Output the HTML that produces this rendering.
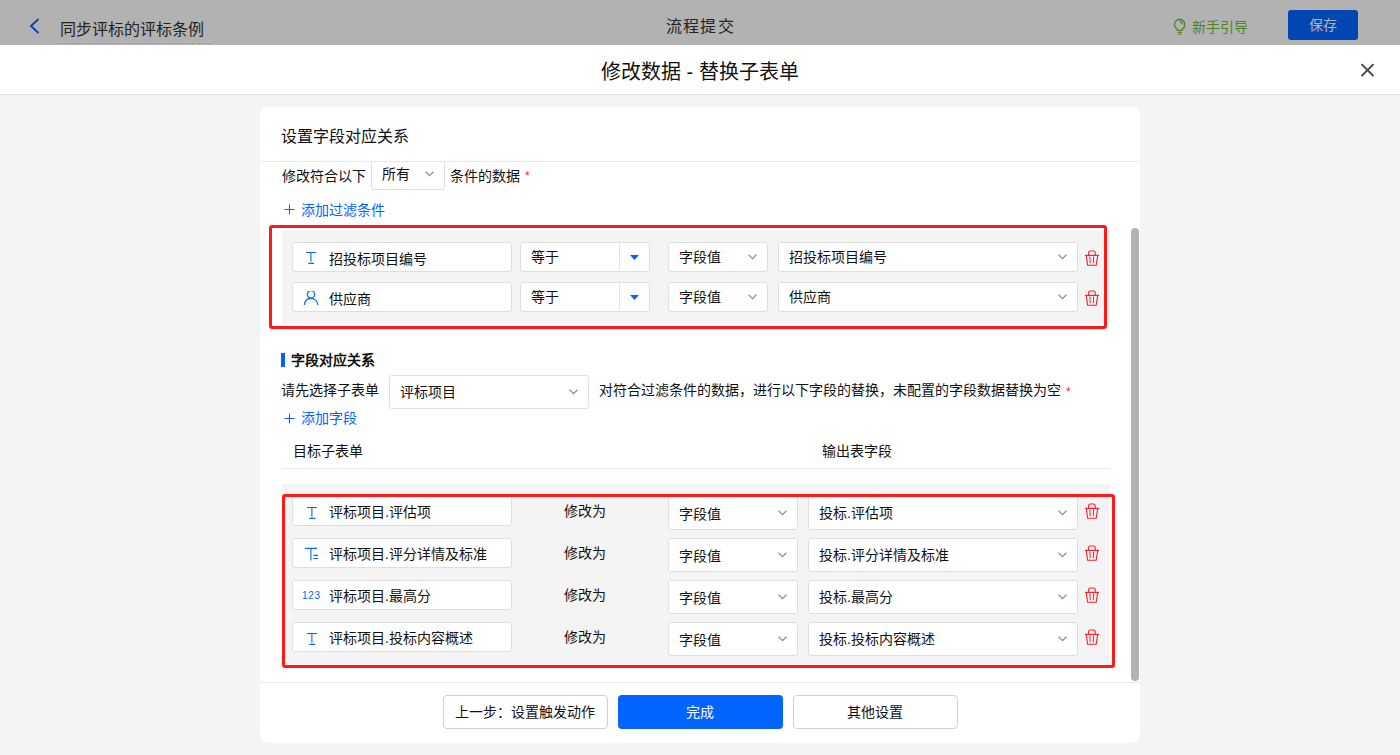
<!DOCTYPE html>
<html lang="zh-CN"><head><meta charset="utf-8">
<style>
*{box-sizing:border-box;margin:0;padding:0}
html,body{width:1400px;height:755px;overflow:hidden;background:#f4f4f4;font-family:"Liberation Sans",sans-serif;color:#111;font-size:14px}
.a{position:absolute}
.t{position:absolute;white-space:nowrap;line-height:20px}
.inp{position:absolute;background:#fff;border:1px solid #dedede;border-radius:3px}
.chev{position:absolute;width:10px;height:6px}
.trash{position:absolute;width:15px;height:16px}
</style></head><body>

<!-- top app header -->
<div class="a" style="left:0;top:0;width:1400px;height:45px;background:#fff">
  <svg class="a" style="left:29px;top:18px" width="11" height="16" viewBox="0 0 11 16"><path d="M9.5 1L2 8L9.5 15" fill="none" stroke="#0265ff" stroke-width="1.9"/></svg>
  <div class="t" style="left:60px;top:20px;font-size:16px;line-height:20px;color:#333">同步评标的评标条例</div>
  <div class="a" style="left:58px;top:43px;width:152px;height:0;border-top:1px dashed #e0e0e0"></div>
  <div class="t" style="left:666px;top:17px;font-size:16px;line-height:20px;letter-spacing:1.2px;color:#333">流程提交</div>
  <svg class="a" style="left:1172px;top:17px" width="16" height="19" viewBox="0 0 16 19"><path d="M5.3 13.4L5.0 11.9A5.2 5.2 0 1 1 10.4 11.9L10.1 13.4Z" fill="none" stroke="#6fbf35" stroke-width="1.3" stroke-linejoin="round"/><path d="M5.6 15.4H9.9M6.5 17.4H9" stroke="#6fbf35" stroke-width="1.2"/><path d="M7.6 4.3A3.3 3.3 0 0 1 10.6 7.4" fill="none" stroke="#6fbf35" stroke-width="1.2"/></svg>
  <div class="t" style="left:1192px;top:17px;color:#6fbf35">新手引导</div>
  <div class="a" style="left:1288px;top:10px;width:70px;height:30px;background:#0265ff;border-radius:3px"></div>
  <div class="t" style="left:1309px;top:15px;color:#fff">保存</div>
</div>
<div class="a" style="left:0;top:0;width:1400px;height:45px;background:rgba(0,0,0,.3)"></div>

<!-- modal header -->
<div class="a" style="left:0;top:45px;width:1400px;height:50px;background:#fff;border-bottom:1px solid #e2e2e2"></div>
<div class="t" style="left:601px;top:60px;font-size:20px;line-height:24px;color:#111">修改数据 - 替换子表单</div>
<svg class="a" style="left:1360px;top:63px" width="15" height="15" viewBox="0 0 15 15"><path d="M1.5 1.1L13.5 13.1M13.5 1.1L1.5 13.1" stroke="#444" stroke-width="2"/></svg>

<!-- card -->
<div class="a" style="left:260px;top:107px;width:880px;height:636px;background:#fff;border-radius:9px"></div>
<div class="t" style="left:281px;top:127px;font-size:16px;line-height:20px">设置字段对应关系</div>
<div class="a" style="left:261px;top:161px;width:878px;height:1px;background:#e8e8e8"></div>

<!-- scroll area -->
<div id="scroll" class="a" style="left:260px;top:162px;width:880px;height:520px;overflow:hidden">
 <div class="a" style="left:-260px;top:-162px;width:1400px;height:755px">
  <div class="t" style="left:282px;top:166px">修改符合以下</div>
  <div class="inp" style="left:371px;top:157px;width:74px;height:33px"></div>
  <div class="t" style="left:382px;top:164px">所有</div>
  <svg class="chev" style="left:425px;top:171px" viewBox="0 0 10 6"><path d="M0.6 0.7L4.5 4.7L8.4 0.7" fill="none" stroke="#8c9099" stroke-width="1.25"/></svg>
  <div class="t" style="left:450px;top:166px">条件的数据</div>
  <div class="t" style="left:525px;top:166px;color:#f5222d;font-size:12px">*</div>
  <svg class="a" style="left:284px;top:204px" width="11" height="11" viewBox="0 0 11 11"><path d="M5.5 0.5V10.5M0.5 5.5H10.5" stroke="#0265ff" stroke-width="1"/></svg>
  <div class="t" style="left:301px;top:200px;color:#0265ff">添加过滤条件</div>

  <!-- filter block -->
  <div class="a" style="left:282px;top:230px;width:828px;height:94px;background:#f4f4f4"></div>
  <div class="inp" style="left:292px;top:242px;width:220px;height:30px"></div>
<svg class="a" style="left:306px;top:251px" width="10" height="14" viewBox="0 0 10 14"><path d="M0.1 1.45H9.9M4.9 1.45V10.7M2.3 12.4H8.05" fill="none" stroke="#0265ff" stroke-width="1.1"/></svg>
<div class="t" style="left:329px;top:249px;">招投标项目编号</div>
<div class="inp" style="left:520px;top:242px;width:130px;height:30px"></div>
<div class="a" style="left:619px;top:242px;width:1px;height:30px;background:#e3e3e3"></div>
<svg class="a" style="left:630px;top:255px" width="9" height="5" viewBox="0 0 9 5"><path d="M0 0H9L4.5 5z" fill="#0265ff"/></svg>
<div class="t" style="left:531px;top:247px;">等于</div>
<div class="inp" style="left:668px;top:242px;width:100px;height:30px"></div>
<div class="t" style="left:679px;top:247px;">字段值</div>
<svg class="chev" style="left:748px;top:254px" viewBox="0 0 10 6"><path d="M0.6 0.7L4.5 4.7L8.4 0.7" fill="none" stroke="#8c9099" stroke-width="1.25"/></svg>
<div class="inp" style="left:778px;top:242px;width:300px;height:30px"></div>
<div class="t" style="left:789px;top:247px;">招投标项目编号</div>
<svg class="chev" style="left:1058px;top:254px" viewBox="0 0 10 6"><path d="M0.6 0.7L4.5 4.7L8.4 0.7" fill="none" stroke="#8c9099" stroke-width="1.25"/></svg>
<svg class="trash" style="left:1085px;top:250px" viewBox="0 0 15 16"><path d="M3.6 5.4V2.6a1.6 1.6 0 0 1 1.6-1.6h3.4a1.6 1.6 0 0 1 1.6 1.6V5.4" fill="none" stroke="#f5222d" stroke-width="1.1"/><path d="M0 5.4H14" stroke="#f5222d" stroke-width="1.2"/><path d="M1.3 5.4L2.6 15.2H11.2L12.7 5.4" fill="none" stroke="#f5222d" stroke-width="1.1"/><path d="M4.9 6.5L5.2 13.2M8.6 6.5L8.3 13.2" stroke="#f5222d" stroke-width="1"/></svg>
<div class="inp" style="left:292px;top:282px;width:220px;height:30px"></div>
<svg class="a" style="left:303px;top:291px" width="17" height="15" viewBox="0 0 17 15"><circle cx="8" cy="3.4" r="3.7" fill="none" stroke="#0265ff" stroke-width="1.2"/><path d="M1.3 14C1.8 10 4.5 7.4 8 7.4S14.4 10 14.9 14" fill="none" stroke="#0265ff" stroke-width="1.2"/></svg>
<div class="t" style="left:329px;top:289px;">供应商</div>
<div class="inp" style="left:520px;top:282px;width:130px;height:30px"></div>
<div class="a" style="left:619px;top:282px;width:1px;height:30px;background:#e3e3e3"></div>
<svg class="a" style="left:630px;top:295px" width="9" height="5" viewBox="0 0 9 5"><path d="M0 0H9L4.5 5z" fill="#0265ff"/></svg>
<div class="t" style="left:531px;top:287px;">等于</div>
<div class="inp" style="left:668px;top:282px;width:100px;height:30px"></div>
<div class="t" style="left:679px;top:287px;">字段值</div>
<svg class="chev" style="left:748px;top:294px" viewBox="0 0 10 6"><path d="M0.6 0.7L4.5 4.7L8.4 0.7" fill="none" stroke="#8c9099" stroke-width="1.25"/></svg>
<div class="inp" style="left:778px;top:282px;width:300px;height:30px"></div>
<div class="t" style="left:789px;top:287px;">供应商</div>
<svg class="chev" style="left:1058px;top:294px" viewBox="0 0 10 6"><path d="M0.6 0.7L4.5 4.7L8.4 0.7" fill="none" stroke="#8c9099" stroke-width="1.25"/></svg>
<svg class="trash" style="left:1085px;top:290px" viewBox="0 0 15 16"><path d="M3.6 5.4V2.6a1.6 1.6 0 0 1 1.6-1.6h3.4a1.6 1.6 0 0 1 1.6 1.6V5.4" fill="none" stroke="#f5222d" stroke-width="1.1"/><path d="M0 5.4H14" stroke="#f5222d" stroke-width="1.2"/><path d="M1.3 5.4L2.6 15.2H11.2L12.7 5.4" fill="none" stroke="#f5222d" stroke-width="1.1"/><path d="M4.9 6.5L5.2 13.2M8.6 6.5L8.3 13.2" stroke="#f5222d" stroke-width="1"/></svg>

  <!-- section 2 -->
  <div class="a" style="left:281px;top:353px;width:4px;height:14px;background:#0265ff"></div>
  <div class="t" style="left:291px;top:350px;font-weight:bold">字段对应关系</div>
  <div class="t" style="left:281px;top:380px">请先选择子表单</div>
  <div class="inp" style="left:389px;top:375px;width:200px;height:34px"></div>
  <div class="t" style="left:400px;top:382px">评标项目</div>
  <svg class="chev" style="left:569px;top:389px" viewBox="0 0 10 6"><path d="M0.6 0.7L4.5 4.7L8.4 0.7" fill="none" stroke="#8c9099" stroke-width="1.25"/></svg>
  <div class="t" style="left:599px;top:380px">对符合过滤条件的数据，进行以下字段的替换，未配置的字段数据替换为空</div>
  <div class="t" style="left:1066px;top:382px;color:#f5222d;font-size:12px">*</div>
  <svg class="a" style="left:284px;top:413px" width="11" height="11" viewBox="0 0 11 11"><path d="M5.5 0.5V10.5M0.5 5.5H10.5" stroke="#0265ff" stroke-width="1"/></svg>
  <div class="t" style="left:301px;top:408px;color:#0265ff">添加字段</div>

  <div class="t" style="left:293px;top:441px">目标子表单</div>
  <div class="t" style="left:822px;top:441px">输出表字段</div>
  <div class="a" style="left:282px;top:468px;width:828px;height:1px;background:#e8e8e8"></div>

  <div class="a" style="left:282px;top:484px;width:828px;height:184px;background:#f4f4f4"></div>
  <div class="inp" style="left:292px;top:496px;width:220px;height:30px"></div>
<svg class="a" style="left:307px;top:506px" width="10" height="14" viewBox="0 0 10 14"><path d="M0.1 1.45H9.9M4.9 1.45V10.7M2.3 12.4H8.05" fill="none" stroke="#0265ff" stroke-width="1.1"/></svg>
<div class="t" style="left:329px;top:502px;">评标项目.评估项</div>
<div class="t" style="left:564px;top:501px;">修改为</div>
<div class="inp" style="left:668px;top:496px;width:130px;height:34px"></div>
<div class="t" style="left:679px;top:504px;">字段值</div>
<svg class="chev" style="left:778px;top:510px" viewBox="0 0 10 6"><path d="M0.6 0.7L4.5 4.7L8.4 0.7" fill="none" stroke="#8c9099" stroke-width="1.25"/></svg>
<div class="inp" style="left:808px;top:496px;width:270px;height:34px"></div>
<div class="t" style="left:819px;top:503px;">投标.评估项</div>
<svg class="chev" style="left:1058px;top:510px" viewBox="0 0 10 6"><path d="M0.6 0.7L4.5 4.7L8.4 0.7" fill="none" stroke="#8c9099" stroke-width="1.25"/></svg>
<svg class="trash" style="left:1085px;top:503px" viewBox="0 0 15 16"><path d="M3.6 5.4V2.6a1.6 1.6 0 0 1 1.6-1.6h3.4a1.6 1.6 0 0 1 1.6 1.6V5.4" fill="none" stroke="#f5222d" stroke-width="1.1"/><path d="M0 5.4H14" stroke="#f5222d" stroke-width="1.2"/><path d="M1.3 5.4L2.6 15.2H11.2L12.7 5.4" fill="none" stroke="#f5222d" stroke-width="1.1"/><path d="M4.9 6.5L5.2 13.2M8.6 6.5L8.3 13.2" stroke="#f5222d" stroke-width="1"/></svg>
<div class="inp" style="left:292px;top:538px;width:220px;height:30px"></div>
<svg class="a" style="left:305px;top:547px" width="14" height="15" viewBox="0 0 14 15"><path d="M0.1 1.4H12M5.9 1.4V13.6M8.3 8.4H13M8.3 11.5H13" fill="none" stroke="#0265ff" stroke-width="1.1"/></svg>
<div class="t" style="left:329px;top:544px;">评标项目.评分详情及标准</div>
<div class="t" style="left:564px;top:543px;">修改为</div>
<div class="inp" style="left:668px;top:538px;width:130px;height:34px"></div>
<div class="t" style="left:679px;top:546px;">字段值</div>
<svg class="chev" style="left:778px;top:552px" viewBox="0 0 10 6"><path d="M0.6 0.7L4.5 4.7L8.4 0.7" fill="none" stroke="#8c9099" stroke-width="1.25"/></svg>
<div class="inp" style="left:808px;top:538px;width:270px;height:34px"></div>
<div class="t" style="left:819px;top:545px;">投标.评分详情及标准</div>
<svg class="chev" style="left:1058px;top:552px" viewBox="0 0 10 6"><path d="M0.6 0.7L4.5 4.7L8.4 0.7" fill="none" stroke="#8c9099" stroke-width="1.25"/></svg>
<svg class="trash" style="left:1085px;top:545px" viewBox="0 0 15 16"><path d="M3.6 5.4V2.6a1.6 1.6 0 0 1 1.6-1.6h3.4a1.6 1.6 0 0 1 1.6 1.6V5.4" fill="none" stroke="#f5222d" stroke-width="1.1"/><path d="M0 5.4H14" stroke="#f5222d" stroke-width="1.2"/><path d="M1.3 5.4L2.6 15.2H11.2L12.7 5.4" fill="none" stroke="#f5222d" stroke-width="1.1"/><path d="M4.9 6.5L5.2 13.2M8.6 6.5L8.3 13.2" stroke="#f5222d" stroke-width="1"/></svg>
<div class="inp" style="left:292px;top:580px;width:220px;height:30px"></div>
<div class="t" style="left:302px;top:590px;font-size:10px;line-height:12px;color:#0265ff;letter-spacing:0.7px">123</div>
<div class="t" style="left:329px;top:586px;">评标项目.最高分</div>
<div class="t" style="left:564px;top:585px;">修改为</div>
<div class="inp" style="left:668px;top:580px;width:130px;height:34px"></div>
<div class="t" style="left:679px;top:588px;">字段值</div>
<svg class="chev" style="left:778px;top:594px" viewBox="0 0 10 6"><path d="M0.6 0.7L4.5 4.7L8.4 0.7" fill="none" stroke="#8c9099" stroke-width="1.25"/></svg>
<div class="inp" style="left:808px;top:580px;width:270px;height:34px"></div>
<div class="t" style="left:819px;top:587px;">投标.最高分</div>
<svg class="chev" style="left:1058px;top:594px" viewBox="0 0 10 6"><path d="M0.6 0.7L4.5 4.7L8.4 0.7" fill="none" stroke="#8c9099" stroke-width="1.25"/></svg>
<svg class="trash" style="left:1085px;top:587px" viewBox="0 0 15 16"><path d="M3.6 5.4V2.6a1.6 1.6 0 0 1 1.6-1.6h3.4a1.6 1.6 0 0 1 1.6 1.6V5.4" fill="none" stroke="#f5222d" stroke-width="1.1"/><path d="M0 5.4H14" stroke="#f5222d" stroke-width="1.2"/><path d="M1.3 5.4L2.6 15.2H11.2L12.7 5.4" fill="none" stroke="#f5222d" stroke-width="1.1"/><path d="M4.9 6.5L5.2 13.2M8.6 6.5L8.3 13.2" stroke="#f5222d" stroke-width="1"/></svg>
<div class="inp" style="left:292px;top:622px;width:220px;height:30px"></div>
<svg class="a" style="left:307px;top:632px" width="10" height="14" viewBox="0 0 10 14"><path d="M0.1 1.45H9.9M4.9 1.45V10.7M2.3 12.4H8.05" fill="none" stroke="#0265ff" stroke-width="1.1"/></svg>
<div class="t" style="left:329px;top:628px;">评标项目.投标内容概述</div>
<div class="t" style="left:564px;top:627px;">修改为</div>
<div class="inp" style="left:668px;top:622px;width:130px;height:34px"></div>
<div class="t" style="left:679px;top:630px;">字段值</div>
<svg class="chev" style="left:778px;top:636px" viewBox="0 0 10 6"><path d="M0.6 0.7L4.5 4.7L8.4 0.7" fill="none" stroke="#8c9099" stroke-width="1.25"/></svg>
<div class="inp" style="left:808px;top:622px;width:270px;height:34px"></div>
<div class="t" style="left:819px;top:629px;">投标.投标内容概述</div>
<svg class="chev" style="left:1058px;top:636px" viewBox="0 0 10 6"><path d="M0.6 0.7L4.5 4.7L8.4 0.7" fill="none" stroke="#8c9099" stroke-width="1.25"/></svg>
<svg class="trash" style="left:1085px;top:629px" viewBox="0 0 15 16"><path d="M3.6 5.4V2.6a1.6 1.6 0 0 1 1.6-1.6h3.4a1.6 1.6 0 0 1 1.6 1.6V5.4" fill="none" stroke="#f5222d" stroke-width="1.1"/><path d="M0 5.4H14" stroke="#f5222d" stroke-width="1.2"/><path d="M1.3 5.4L2.6 15.2H11.2L12.7 5.4" fill="none" stroke="#f5222d" stroke-width="1.1"/><path d="M4.9 6.5L5.2 13.2M8.6 6.5L8.3 13.2" stroke="#f5222d" stroke-width="1"/></svg>
 </div>
</div>
<!-- red annotation boxes -->
<div class="a" style="left:269px;top:225px;width:838px;height:104px;border:3px solid #ff1a1a;border-radius:3px"></div>
<div class="a" style="left:282px;top:494px;width:833px;height:174px;border:3px solid #ff1a1a;border-radius:3px"></div>

<!-- scrollbar -->
<div class="a" style="left:1131px;top:228px;width:8px;height:453px;background:#b3b3b3;border-radius:4px"></div>

<!-- footer -->
<div class="a" style="left:260px;top:682px;width:880px;height:1px;background:#e8e8e8"></div>
<div class="a" style="left:443px;top:695px;width:165px;height:34px;border:1px solid #d0d0d0;border-radius:4px;background:#fff"></div>
<div class="t" style="left:455px;top:702px">上一步：设置触发动作</div>
<div class="a" style="left:618px;top:695px;width:165px;height:34px;background:#0265ff;border-radius:4px"></div>
<div class="t" style="left:686px;top:702px;color:#fff">完成</div>
<div class="a" style="left:793px;top:695px;width:165px;height:34px;border:1px solid #d0d0d0;border-radius:4px;background:#fff"></div>
<div class="t" style="left:847px;top:702px">其他设置</div>

</body></html>
